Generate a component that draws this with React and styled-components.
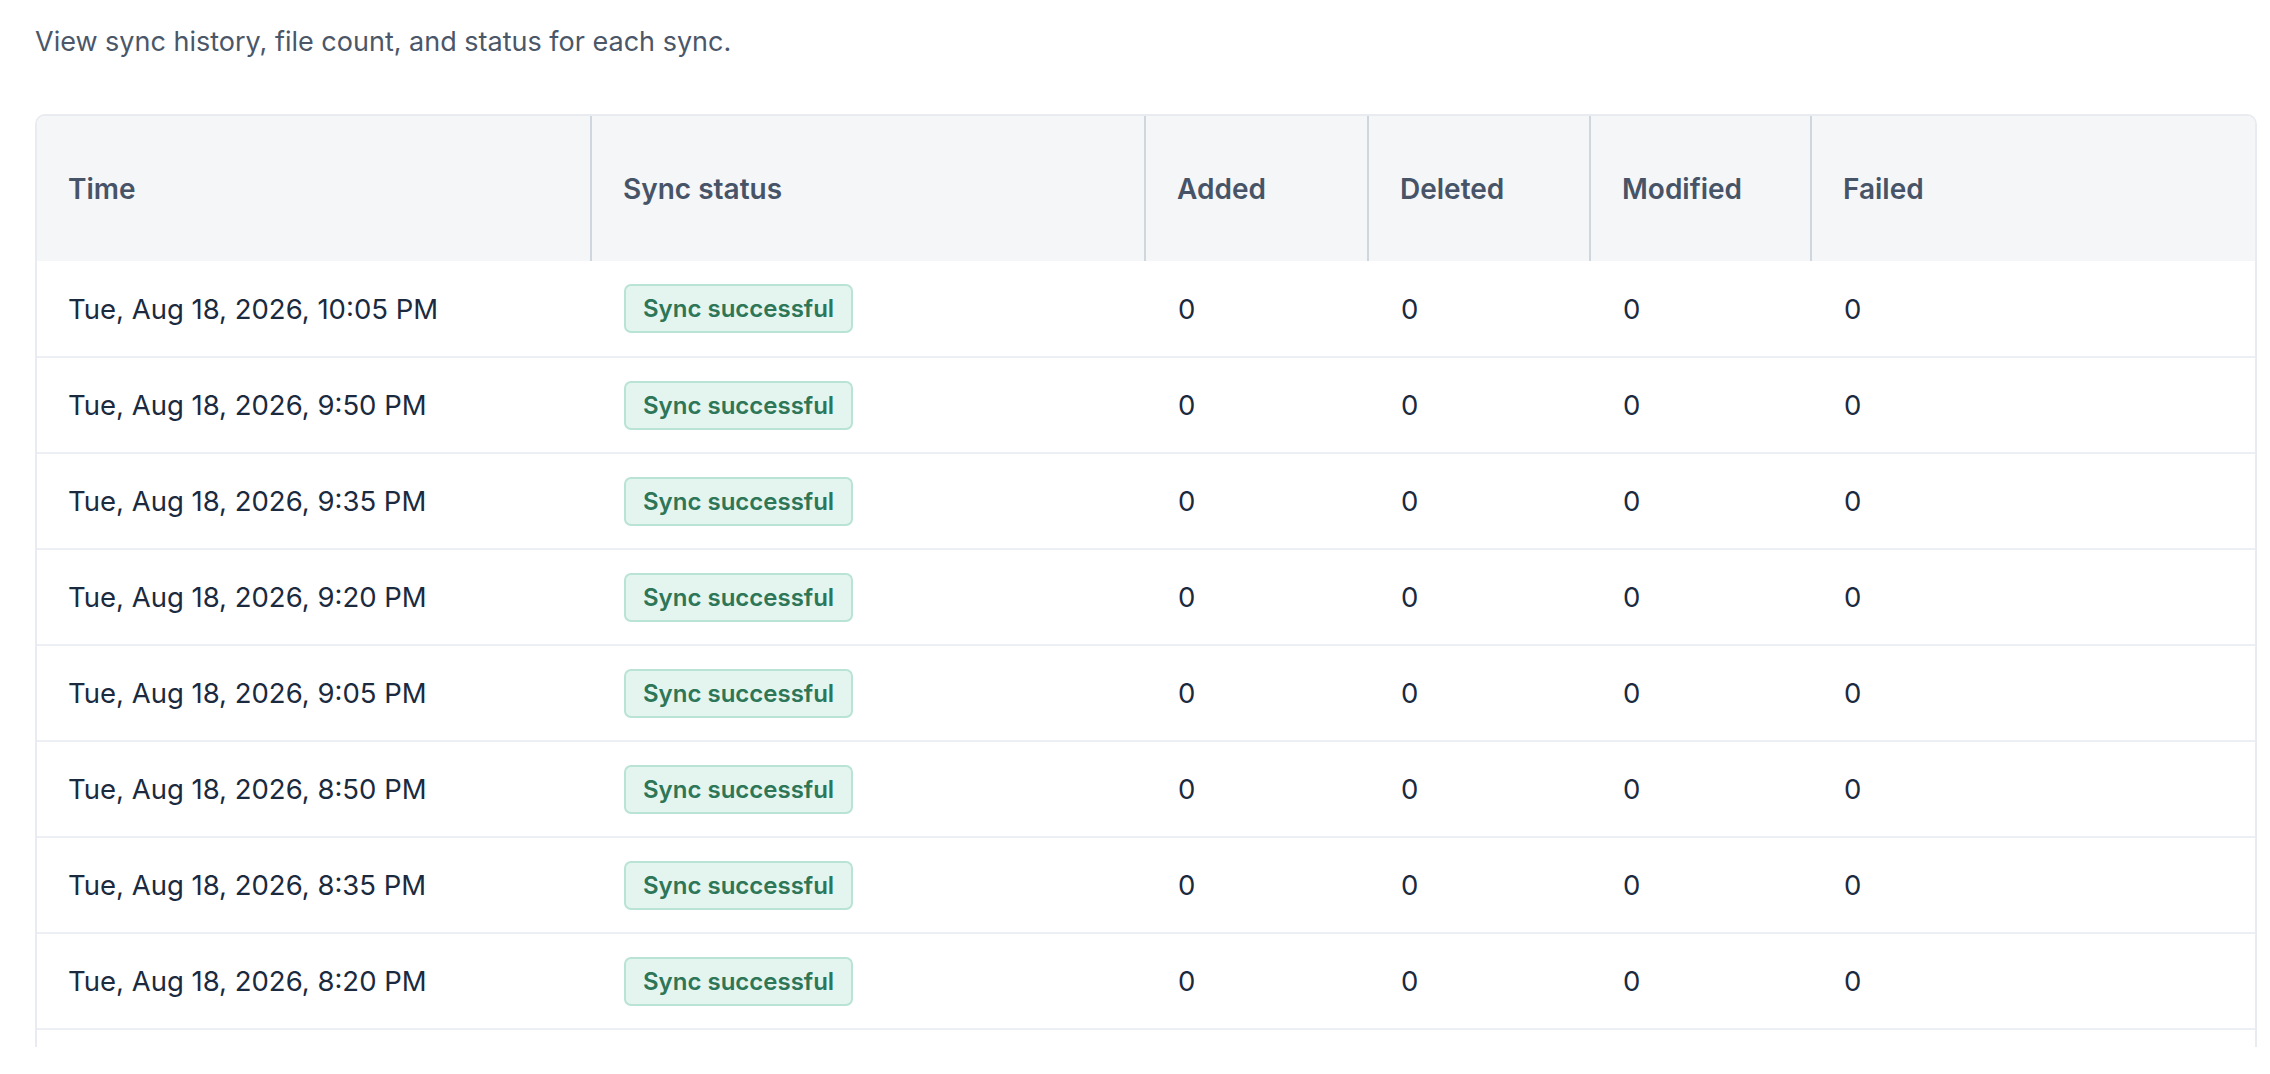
import React from 'react';
import styled, { createGlobalStyle } from 'styled-components';

const GlobalStyle = createGlobalStyle`
  html, body {
    margin: 0;
    padding: 0;
    background: #ffffff;
  }
  body {
    font-family: Inter, "Noto Sans", "Liberation Sans", sans-serif;
    -webkit-font-smoothing: antialiased;
  }
`;

const Page = styled.div`
  padding: 23px 13px 0 35px;
`;

const Intro = styled.p`
  margin: 0 0 53px;
  font-size: 27px;
  line-height: 38px;
  color: #4b5768;
`;

const Frame = styled.div`
  max-height: 931px;
  overflow: hidden;
  border: 2px solid #e8ebef;
  border-bottom: none;
  border-radius: 10px 10px 0 0;
`;

const Table = styled.table`
  width: 100%;
  border-collapse: collapse;
  table-layout: fixed;
`;

const HeadCell = styled.th`
  box-sizing: border-box;
  width: ${(p) => (p.$w ? `${p.$w}px` : 'auto')};
  height: 145px;
  padding: 0 0 0 31px;
  text-align: left;
  vertical-align: middle;
  background: #f5f6f8;
  font-size: 28px;
  font-weight: 600;
  color: #475467;
  border-left: ${(p) => (p.$first ? 'none' : '2px solid #d0d6dd')};
`;

const Row = styled.tr`
  border-bottom: 2px solid #eceff3;
`;

const Cell = styled.td`
  box-sizing: border-box;
  height: 96px;
  padding: 0 0 0 ${(p) => (p.$first ? 31 : 33)}px;
  vertical-align: middle;
  font-size: 27.5px;
  color: #1b2a3e;
`;

const Badge = styled.span`
  display: inline-flex;
  align-items: center;
  height: 49px;
  padding: 0 17px;
  box-sizing: border-box;
  border: 2px solid #b9e3d4;
  border-radius: 7px;
  background: #e4f5f0;
  color: #2d7657;
  font-size: 24px;
  font-weight: 600;
`;

const columns = [
  { label: 'Time', w: 554 },
  { label: 'Sync status', w: 554 },
  { label: 'Added', w: 223 },
  { label: 'Deleted', w: 222 },
  { label: 'Modified', w: 221 },
  { label: 'Failed' },
];

const times = [
  '10:05 PM',
  '9:50 PM',
  '9:35 PM',
  '9:20 PM',
  '9:05 PM',
  '8:50 PM',
  '8:35 PM',
  '8:20 PM',
  '8:05 PM',
  '7:50 PM',
];

export default function App() {
  return (
    <>
      <GlobalStyle />
      <Page>
        <Intro>View sync history, file count, and status for each sync.</Intro>
        <Frame>
          <Table>
            <thead>
              <tr>
                {columns.map((c, i) => (
                  <HeadCell key={c.label} $w={c.w} $first={i === 0}>
                    {c.label}
                  </HeadCell>
                ))}
              </tr>
            </thead>
            <tbody>
              {times.map((t) => (
                <Row key={t}>
                  <Cell $first>Tue, Aug 18, 2026, {t}</Cell>
                  <Cell>
                    <Badge>Sync successful</Badge>
                  </Cell>
                  <Cell>0</Cell>
                  <Cell>0</Cell>
                  <Cell>0</Cell>
                  <Cell>0</Cell>
                </Row>
              ))}
            </tbody>
          </Table>
        </Frame>
      </Page>
    </>
  );
}
